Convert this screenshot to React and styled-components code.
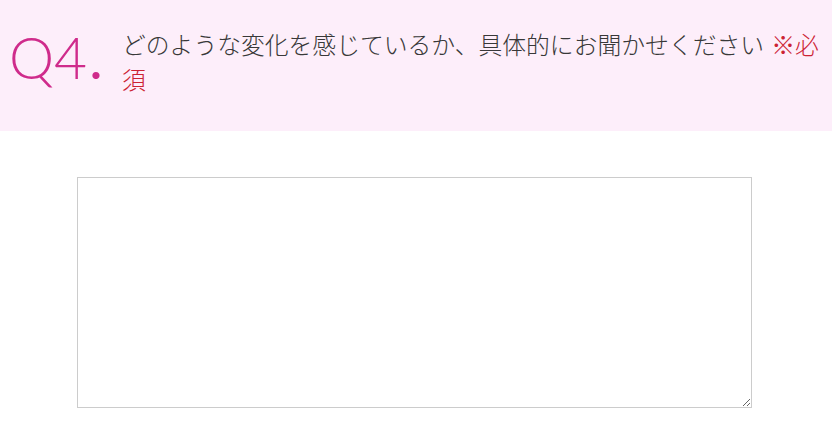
import React from 'react';
import styled, { createGlobalStyle } from 'styled-components';

const GlobalStyle = createGlobalStyle`
  body {
    margin: 0;
    background: #ffffff;
    font-family: "Noto Sans CJK JP", "Noto Sans", sans-serif;
  }
`;

const Question = styled.div`
  display: flex;
  align-items: flex-start;
  background-color: #fdeefa;
  height: 131px;
  box-sizing: border-box;
  padding: 26px 10px 0 9px;
`;

const Number = styled.div`
  width: 113px;
  flex-shrink: 0;
  margin-top: 3px;
  font-family: "Lato", "DejaVu Sans", sans-serif;
  font-weight: 300;
  font-size: 57px;
  line-height: 1;
  color: #cf2b8b;
`;

const Dot = styled.span`
  font-weight: 400;
  margin-left: 2px;
`;

const Title = styled.p`
  margin: 0;
  width: 700px;
  font-size: 23.8px;
  font-weight: 300;
  line-height: 35px;
  color: #383838;
`;

const Required = styled.span`
  color: #cc2233;
  margin-left: 2px;
`;

const Answer = styled.div`
  padding: 46px 0 0 77px;
`;

const TextArea = styled.textarea`
  display: block;
  box-sizing: border-box;
  width: 675px;
  height: 231px;
  margin: 0;
  border: 1px solid #cccccc;
  background: #ffffff;
  outline: none;
`;

const App = function () {
  return (
    <>
      <GlobalStyle />
      <Question>
        <Number>
          Q4
          <Dot>.</Dot>
        </Number>
        <Title>
          どのような変化を感じているか、具体的にお聞かせください
          {' '}
          <Required>※必須</Required>
        </Title>
      </Question>
      <Answer>
        <TextArea />
      </Answer>
    </>
  );
};

export default App;
